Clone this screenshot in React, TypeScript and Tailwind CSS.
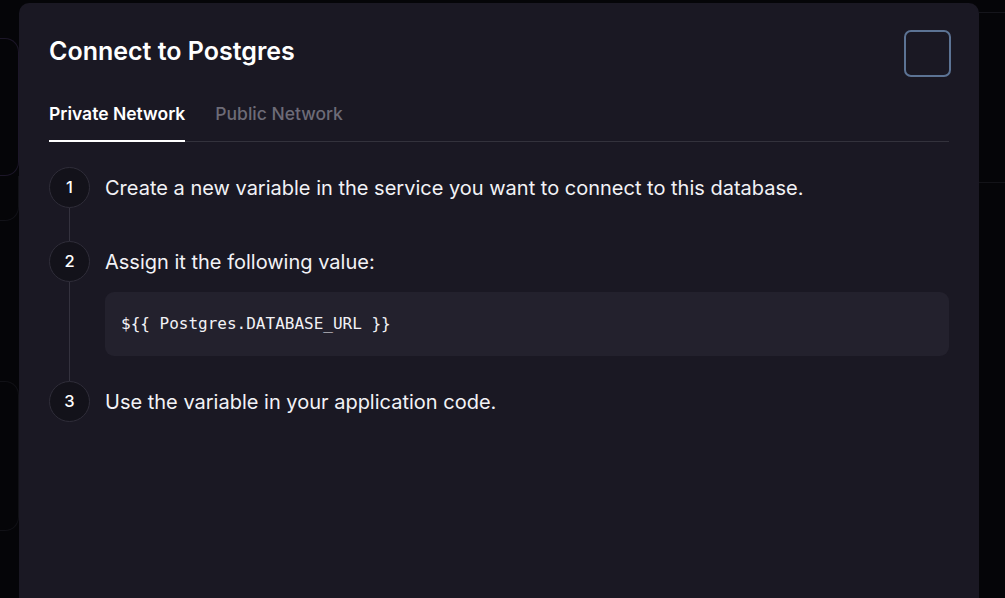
import React from "react";

const steps = [
    { n: 1, text: "Create a new variable in the service you want to connect to this database." },
    { n: 2, text: "Assign it the following value:", code: "${{ Postgres.DATABASE_URL }}" },
    { n: 3, text: "Use the variable in your application code." },
];

export default function App() {
    return (
        <div className="flex h-[598px] w-[1005px] overflow-hidden bg-[#050508] font-['Inter','Noto_Sans',sans-serif]">
            {/* backdrop scraps on the left */}
            <div className="flex w-[19px] shrink-0 flex-col">
                <div className="mt-[38px] h-[138px] rounded-r-[14px] border border-l-0 border-[#1c1628]" />
                <div className="h-[45px] rounded-br-[14px] border border-l-0 border-t-0 border-[#121218]" />
                <div className="mt-[160px] h-[150px] rounded-r-[14px] border border-l-0 border-[#111116]" />
            </div>

            <div className="mt-[3px] flex w-[960px] shrink-0 flex-col rounded-t-[10px] bg-[#1a1823] px-[30px]">
                <div className="flex items-start justify-between pt-[27px]">
                    <h2 className="pt-[6px] text-[25px] leading-[30px] font-semibold text-white">Connect to Postgres</h2>
                    <button className="mr-[-2px] h-[47px] w-[47px] rounded-[7px] border-2 border-[#5c7394]" />
                </div>

                <div className="mt-[19px] flex gap-[30px] border-b border-[#33323c]">
                    <div className="-mb-px border-b-2 border-white pb-[14px] pt-[6px] text-[17.5px] leading-[24px] font-semibold text-white">Private Network</div>
                    <div className="pb-[14px] pt-[6px] text-[17.5px] leading-[24px] font-medium text-[#6d6b77]">Public Network</div>
                </div>

                <div className="mt-[25px] flex flex-col">
                    {steps.map((s, i) => (
                        <div key={s.n} className="flex gap-[15px]">
                            <div className="flex w-[41px] flex-col items-center">
                                <div className="flex h-[41px] w-[41px] items-center justify-center rounded-full border border-[#2f2d39] bg-[#13121a] text-[16.5px] font-medium text-white">
                                    {s.n}
                                </div>
                                {i < steps.length - 1 && <div className="w-px flex-1 bg-[#34323e]" />}
                            </div>
                            <div className={i === 0 ? "flex-1 pb-[33px]" : "flex-1 pb-[25px]"}>
                                <div className="flex h-[41px] items-center text-[20px] text-[#f2f2f6]">{s.text}</div>
                                {s.code && (
                                    <div className="mt-[10px] flex h-[64px] items-center rounded-[9px] bg-[#23212d] px-[16px] font-['DejaVu_Sans_Mono',monospace] text-[16px] text-[#f2f2f6]">
                                        {s.code}
                                    </div>
                                )}
                            </div>
                        </div>
                    ))}
                </div>
            </div>

            {/* backdrop scraps on the right */}
            <div className="flex flex-1 flex-col">
                <div className="mt-[12px] h-px bg-[#15151b]" />
                <div className="mt-[169px] h-px bg-[#131318]" />
            </div>
        </div>
    );
}
